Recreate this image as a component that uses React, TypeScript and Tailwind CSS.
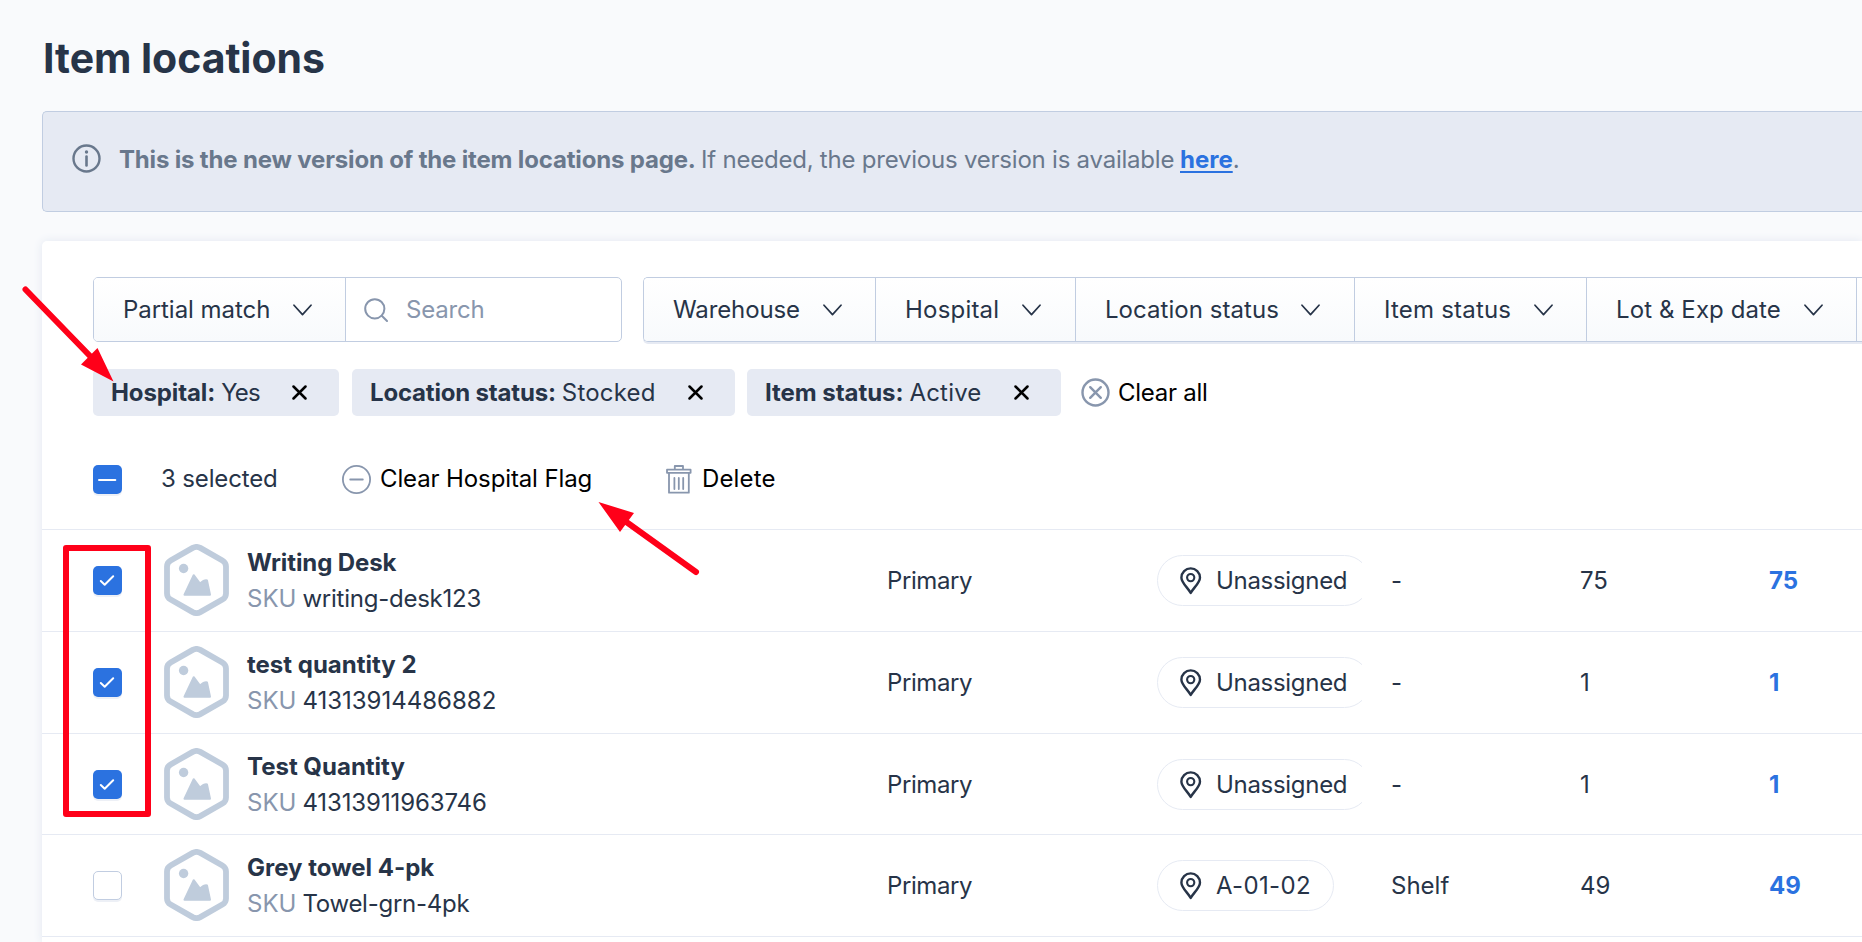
import type { ReactNode } from "react";

function Chevron() {
  return (
    <svg className="h-3 w-[19px] shrink-0" viewBox="0 0 19 12" fill="none" stroke="#273448" strokeWidth="1.7" strokeLinecap="round" strokeLinejoin="round">
      <path d="M1 1.2 9.5 10.6 18 1.2" />
    </svg>
  );
}

function FilterButton({ label, className }: { label: string; className: string }) {
  return (
    <button
      className={`flex h-full shrink-0 items-center justify-between border-r border-[#c1cde1] bg-gradient-to-b from-white to-[#f8fafc] pl-[29px] ${className}`}
    >
      <span>{label}</span>
      <Chevron />
    </button>
  );
}

function Chip({ name, value, className, nameClass, valueClass }: { name: string; value: string; className: string; nameClass: string; valueClass: string }) {
  return (
    <div className={`flex shrink-0 items-center justify-between rounded-[5px] bg-[#e6eaf3] pr-8 pl-[18px] ${className}`}>
      <div className="flex gap-1.5">
        <span className={`font-bold ${nameClass}`}>{name}</span>
        <span className={valueClass}>{value}</span>
      </div>
      <svg className="size-[15px]" viewBox="0 0 15 15" stroke="#000" strokeWidth="2.5" strokeLinecap="round">
        <path d="M1.5 1.5 13.5 13.5M13.5 1.5 1.5 13.5" />
      </svg>
    </div>
  );
}

function Checkbox({ state }: { state: "on" | "off" | "mixed" }) {
  if (state === "off") {
    return <div className="size-[29px] shrink-0 rounded-[5px] border border-[#c1cde1] bg-white shadow-[0_2px_0_#edf0f6]" />;
  }
  return (
    <div className="size-[29px] shrink-0 rounded-[5px] bg-[#2b72e0] shadow-[0_2px_0_#edf0f6]">
      <svg className="size-[29px]" viewBox="0 0 29 29" fill="none" stroke="#fff" strokeWidth="2" strokeLinecap="round" strokeLinejoin="round">
        <path d={state === "mixed" ? "M6 15H22.3" : "M7.8 15 11.7 18.7 20.2 10.3"} />
      </svg>
    </div>
  );
}

function Placeholder() {
  return (
    <svg className="h-[72px] w-[65px] shrink-0" viewBox="0 0 65 72" fill="none">
      <path
        d="M28.7 3.9Q32.5 1.9 36.3 3.9L58.4 16.4Q62 18.5 62 22.5V49.5Q62 53.5 58.4 55.6L36.3 68.1Q32.5 70.1 28.7 68.1L6.6 55.6Q3 53.5 3 49.5V22.5Q3 18.5 6.6 16.4Z"
        stroke="#bfccdc"
        strokeWidth="5.8"
      />
      <circle cx="19.6" cy="24.5" r="4.7" fill="#bfccdc" />
      <path d="M20.5 50.7 29.7 31.2 36 39.5Q40.5 35.7 43 36.5L46 50.7Z" fill="#bfccdc" stroke="#bfccdc" strokeWidth="2" strokeLinejoin="round" />
    </svg>
  );
}

function Pin() {
  return (
    <svg className="h-7 w-[22px] shrink-0" viewBox="0 0 22 28" fill="none" stroke="#273448" strokeWidth="2.4">
      <path d="M10.7 26C8.3 21.2 1.4 15.8 1.4 10.7A9.3 9.3 0 0 1 20 10.7C20 15.8 13.1 21.2 10.7 26Z" strokeLinejoin="round" />
      <circle cx="10.7" cy="10.6" r="3.6" strokeWidth="2.1" />
    </svg>
  );
}

type Item = {
  name: string;
  sku: string;
  nameClass?: string;
  skuClass?: string;
  place: string;
  placeClass: string;
  kind: string;
  qty: string;
  checked: boolean;
  rowClass: string;
};

const items: Item[] = [
  { name: "Writing Desk", nameClass: "tracking-[-0.1px]", sku: "writing-desk123", skuClass: "tracking-[-0.24px]", place: "Unassigned", placeClass: "tracking-[-0.3px]", kind: "-", qty: "75", checked: true, rowClass: "h-[102px]" },
  { name: "test quantity 2", sku: "41313914486882", place: "Unassigned", placeClass: "tracking-[-0.3px]", kind: "-", qty: "1", checked: true, rowClass: "h-[102px]" },
  { name: "Test Quantity", sku: "41313911963746", skuClass: "tracking-[-0.1px]", place: "Unassigned", placeClass: "tracking-[-0.3px]", kind: "-", qty: "1", checked: true, rowClass: "h-[101px] pt-px" },
  { name: "Grey towel 4-pk", sku: "Towel-grn-4pk", skuClass: "tracking-[-0.26px]", place: "A-01-02", placeClass: "tracking-[0.35px]", kind: "Shelf", qty: "49", checked: false, rowClass: "h-[102px]" },
];

function Row({ item }: { item: Item }) {
  return (
    <div className={`flex shrink-0 items-center border-b border-[#e6eaf3] pl-[51px] ${item.rowClass}`}>
      <Checkbox state={item.checked ? "on" : "off"} />
      <div className="mb-0.5 ml-[42px]">
        <Placeholder />
      </div>
      <div className="ml-[18px] flex w-[640px] flex-col">
        <span className={`leading-9 font-bold ${item.nameClass ?? ""}`}>{item.name}</span>
        <span className={`leading-9 ${item.skuClass ?? ""}`}>
          <span className="mr-1.5 tracking-normal text-[#8896ad]">SKU</span>
          {item.sku}
        </span>
      </div>
      <span className="w-[270px] tracking-[-0.4px]">Primary</span>
      <div className="w-[205px] overflow-hidden">
        <div className="flex h-[51px] w-fit items-center rounded-full border border-[#e6eaf3] pr-[22px] pl-[22px]">
          <Pin />
          <span className={`ml-3.5 ${item.placeClass}`}>{item.place}</span>
        </div>
      </div>
      <span className="ml-[29px] w-[189px]">{item.kind}</span>
      <span className="w-[189px]">{item.qty}</span>
      <span className="font-bold text-[#2b72e0]">{item.qty}</span>
    </div>
  );
}

function ActionIcon({ children }: { children: ReactNode }) {
  return (
    <svg className="size-[29px] shrink-0" viewBox="0 0 29 29" fill="none" stroke="#8896ad" strokeWidth="1.8" strokeLinecap="round" strokeLinejoin="round">
      {children}
    </svg>
  );
}

export default function App() {
  return (
    <div className="relative flex h-[942px] w-[1862px] flex-col overflow-hidden bg-[#f9fafc] pl-[42px] font-['Inter',sans-serif] text-[24px] leading-9 whitespace-nowrap text-[#273448]">
      <h1 className="h-[111px] shrink-0 pt-[30px] pl-px text-[41px] leading-[56px] font-bold tracking-[-0.05px]">Item locations</h1>

      <div className="flex h-[101px] shrink-0 items-start rounded-l-[5px] border border-r-0 border-[#c1cde1] bg-[#e6eaf3] pt-[29px] pl-[29px] text-[#69788c]">
        <svg className="mt-[3px] size-[29px] shrink-0" viewBox="0 0 29 29" fill="none" stroke="#69788c" strokeWidth="2.4">
          <circle cx="14.5" cy="14.5" r="13" />
          <path d="M14.5 12.5V21.5" strokeWidth="2.6" strokeLinecap="round" />
          <circle cx="14.5" cy="8" r="1.7" fill="#69788c" stroke="none" />
        </svg>
        <p className="mt-px ml-[18px] flex">
          <span className="w-[582px] font-bold tracking-[-0.17px]">This is the new version of the item locations page.</span>
          <span className="w-[479px] tracking-[-0.22px]">If needed, the previous version is available</span>
          <a className="font-bold text-[#2b72e0] underline decoration-2 underline-offset-[3px]">here</a>.
        </p>
      </div>

      <main className="mt-[29px] flex grow flex-col rounded-tl-[5px] bg-white shadow-[0_0_10px_#e3e8f2]">
        <div className="flex h-[101px] shrink-0 pt-9 pl-[51px]">
          <div className="h-[65px] w-[529px] shrink-0 rounded-[5px] border border-[#c1cde1]">
            <div className="flex h-full overflow-hidden rounded-[4px]">
              <FilterButton label="Partial match" className="w-[252px] pr-[33px] tracking-[-0.05px]" />
              <div className="flex items-center pl-[18px] text-[#8896ad]">
                <svg className="size-6" viewBox="0 0 24 24" fill="none" stroke="#8896ad" strokeWidth="2" strokeLinecap="round">
                  <circle cx="10.8" cy="10.8" r="9.6" />
                  <path d="M17.8 17.8 23 23" />
                </svg>
                <span className="ml-[18px] tracking-[-0.2px]">Search</span>
              </div>
            </div>
          </div>
          <div className="ml-[21px] h-[65px] grow rounded-l-[5px] shadow-[0_2px_0_#e6eaf3]">
            <div className="flex h-full overflow-hidden rounded-l-[5px] border border-r-0 border-[#c1cde1]">
              <FilterButton label="Warehouse" className="w-[232px] pr-[33px] tracking-[-0.12px]" />
              <FilterButton label="Hospital" className="w-[200px] pr-[34px] tracking-[0.2px]" />
              <FilterButton label="Location status" className="w-[279px] pr-[34px] tracking-[0.05px]" />
              <FilterButton label="Item status" className="w-[232px] pr-[33px] tracking-[0.2px]" />
              <FilterButton label="Lot & Exp date" className="w-[270px] pr-[33px] tracking-[0.1px]" />
              <div className="grow bg-gradient-to-b from-white to-[#f8fafc]" />
            </div>
          </div>
        </div>

        <div className="mt-[27px] flex h-[47px] shrink-0 pl-[51px]">
          <Chip name="Hospital:" value="Yes" className="w-[246px]" nameClass="tracking-[-0.1px]" valueClass="tracking-[-0.8px]" />
          <Chip name="Location status:" value="Stocked" className="ml-[13px] w-[383px]" nameClass="tracking-[-0.18px]" valueClass="tracking-[0.2px]" />
          <Chip name="Item status:" value="Active" className="ml-3 w-[314px]" nameClass="tracking-[-0.05px]" valueClass="tracking-[0.2px]" />
          <button className="ml-5 flex items-center text-black">
            <svg className="size-[29px]" viewBox="0 0 29 29" fill="none" stroke="#8896ad" strokeWidth="2.4" strokeLinecap="round">
              <circle cx="14.5" cy="14.5" r="13" />
              <path d="M9.2 9.2 19.8 19.8M19.8 9.2 9.2 19.8" />
            </svg>
            <span className="ml-2 tracking-[-0.25px]">Clear all</span>
          </button>
        </div>

        <div className="flex h-[114px] shrink-0 items-center border-b border-[#e6eaf3] pt-[13px] pl-[51px]">
          <Checkbox state="mixed" />
          <span className="ml-[39px] w-[181px] tracking-[-0.15px]">3 selected</span>
          <button className="flex w-[324px] items-center text-black">
            <ActionIcon>
              <circle cx="14.5" cy="14.5" r="13.6" />
              <path d="M8.2 14.5H20.8" />
            </ActionIcon>
            <span className="ml-[9px] tracking-[-0.12px]">Clear Hospital Flag</span>
          </button>
          <button className="flex items-center text-black">
            <ActionIcon>
              <path d="M8.8 4.4V1H17V4.4M1 4.7H24.6V7.8H1ZM3 8V27.7H22.8V8M8.4 13V24M12.8 13V24M17.2 13V24" />
            </ActionIcon>
            <span className="ml-[7px] tracking-[0.15px]">Delete</span>
          </button>
        </div>

        {items.map((item) => (
          <Row key={item.name} item={item} />
        ))}
      </main>

      <svg className="pointer-events-none absolute inset-0 h-[942px] w-[1862px]" viewBox="0 0 1862 942" fill="none" stroke="#ff0019">
        <path d="M25.5 289.5 91 357M696 572 625 521" strokeWidth="6" strokeLinecap="round" />
        <path d="M113.5 381.5 97.5 348 81 364.5ZM598.5 502 634 513 620 532Z" fill="#ff0019" stroke="none" />
        <rect x="66" y="548" width="82" height="266" strokeWidth="6" strokeLinejoin="round" />
      </svg>
    </div>
  );
}
